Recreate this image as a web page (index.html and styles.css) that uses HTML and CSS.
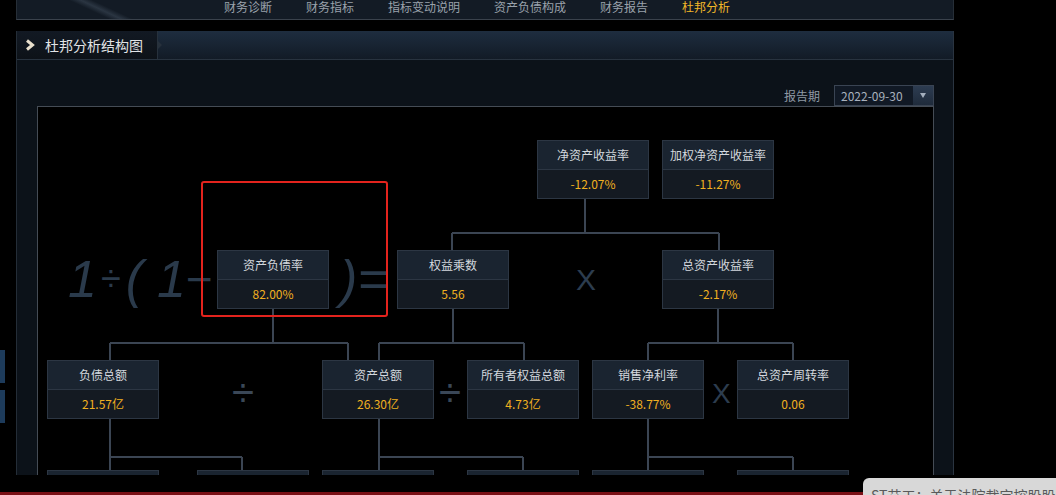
FILE: index.html
```html
<!DOCTYPE html>
<html lang="zh-CN">
<head>
<meta charset="utf-8">
<title>杜邦分析结构图</title>
<link rel="stylesheet" href="styles.css">
</head>
<body>
<div class="page">
  <nav class="topnav">
    <a class="nav-item">财务诊断</a>
    <a class="nav-item">财务指标</a>
    <a class="nav-item">指标变动说明</a>
    <a class="nav-item">资产负债构成</a>
    <a class="nav-item">财务报告</a>
    <a class="nav-item active">杜邦分析</a>
  </nav>

  <section class="panel">
    <header class="panel-head">
      <div class="tab">
        <svg class="chev" width="10" height="12" viewBox="0 0 10 12"><polyline points="2,1.5 7.5,6 2,10.5" fill="none" stroke="#e8dfcc" stroke-width="3"/></svg>
        <span class="tab-title">杜邦分析结构图</span>
      </div>
    </header>

    <div class="toolbar">
      <span class="label">报告期</span>
      <div class="select">
        <span class="select-text">2022-09-30</span>
        <span class="select-btn"><i class="tri"></i></span>
      </div>
    </div>

    <div class="chart">
      <svg class="links" width="895" height="368" viewBox="0 0 895 368">
        <g fill="none" stroke="#3b4553" stroke-width="2">
          <path d="M547 92V126M414 126H681M414 126V143M681 126V143"/>
          <path d="M235 202V236M72 236H310M72 236V253M310 236V253"/>
          <path d="M415 202V236M341 236H486M341 236V253M486 236V253"/>
          <path d="M680 202V236M610 236H755M610 236V253M755 236V253"/>
          <path d="M72 311V363M72 350H204M204 350V363"/>
          <path d="M341 311V363M341 350H485M485 350V363"/>
          <path d="M610 311V363M610 350H755M755 350V363"/>
        </g>
      </svg>

      <div class="formula formula-left">
        <span class="g g-one">1</span><span class="g g-div">÷</span><span class="g g-lp">(</span><span class="g g-one2">1</span><span class="g g-minus">−</span>
      </div>
      <div class="formula formula-right">
        <span class="g g-rp">)</span><span class="g g-eq">=</span>
      </div>
      <div class="op op-x op-x1">X</div>
      <div class="op op-x op-x2">X</div>
      <div class="op op-div op-div1">÷</div>
      <div class="op op-div op-div2">÷</div>

      <div class="node n-roe"><div class="n-title">净资产收益率</div><div class="n-value">-12.07%</div></div>
      <div class="node n-wroe"><div class="n-title">加权净资产收益率</div><div class="n-value">-11.27%</div></div>
      <div class="node n-debt-ratio"><div class="n-title">资产负债率</div><div class="n-value">82.00%</div></div>
      <div class="node n-multiplier"><div class="n-title">权益乘数</div><div class="n-value">5.56</div></div>
      <div class="node n-roa"><div class="n-title">总资产收益率</div><div class="n-value">-2.17%</div></div>
      <div class="node n-debt"><div class="n-title">负债总额</div><div class="n-value">21.57亿</div></div>
      <div class="node n-assets"><div class="n-title">资产总额</div><div class="n-value">26.30亿</div></div>
      <div class="node n-equity"><div class="n-title">所有者权益总额</div><div class="n-value">4.73亿</div></div>
      <div class="node n-margin"><div class="n-title">销售净利率</div><div class="n-value">-38.77%</div></div>
      <div class="node n-turnover"><div class="n-title">总资产周转率</div><div class="n-value">0.06</div></div>

      <div class="node b1"><div class="n-title"></div><div class="n-value"></div></div>
      <div class="node b2"><div class="n-title"></div><div class="n-value"></div></div>
      <div class="node b3"><div class="n-title"></div><div class="n-value"></div></div>
      <div class="node b4"><div class="n-title"></div><div class="n-value"></div></div>
      <div class="node b5"><div class="n-title"></div><div class="n-value"></div></div>
      <div class="node b6"><div class="n-title"></div><div class="n-value"></div></div>

      <div class="highlight"></div>
    </div>
  </section>

  <div class="footer-line"></div>

  <div class="side-tab side-tab-1"></div>
  <div class="side-tab side-tab-2"></div>

  <div class="toast">ST艾工：关于法院裁定控股股东所持部分股份</div>
</div>
</body>
</html>
```

FILE: styles.css
```css
html, body {
  margin: 0;
  padding: 0;
  background: #000;
}

body {
  font-family: "Noto Sans CJK SC", "Noto Sans", sans-serif;
}

.page {
  position: relative;
  width: 1056px;
  height: 495px;
  overflow: hidden;
  background: #000;
}

/* ---------- top navigation ---------- */
.topnav {
  margin-left: 16px;
  width: 938px;
  height: 20px;
  box-sizing: border-box;
  border-left: 1px solid #262e37;
  border-right: 1px solid #262e37;
  border-bottom: 1px solid #3a424c;
  background:
    linear-gradient(25deg, rgba(0,0,0,0) 39px, rgba(110,128,148,0.26) 44px, rgba(0,0,0,0) 49px),
    #131b25;
  display: flex;
  gap: 34px;
  padding-left: 207px;
  font-size: 12px;
  line-height: 14px;
}

.nav-item {
  color: #9aa2ab;
  white-space: nowrap;
}

.nav-item.active {
  color: #f2b728;
}

/* ---------- panel ---------- */
.panel {
  margin-top: 11px;
  margin-left: 16px;
  width: 938px;
  height: 444px;
  box-sizing: border-box;
  border-left: 1px solid #242d37;
  border-right: 1px solid #2a3440;
  background: #0c1219;
  overflow: hidden;
}

.panel-head {
  height: 29px;
  box-sizing: border-box;
  border-bottom: 1px solid #28333f;
  background: linear-gradient(#1e2d3f, #121b26);
  display: flex;
}

.tab {
  position: relative;
  width: 141px;
  box-sizing: border-box;
  border-right: 1px solid #27313c;
  background: linear-gradient(#121923, #0d1218);
  display: flex;
  align-items: center;
  padding-left: 8px;
  gap: 10px;
}

.tab::after {
  content: "";
  position: absolute;
  right: -5px;
  top: 10px;
  border-left: 4px solid #27313c;
  border-top: 4px solid transparent;
  border-bottom: 4px solid transparent;
}

.chev {
  display: block;
}

.tab-title {
  font-size: 14px;
  color: #e2e4e6;
  white-space: nowrap;
}

.toolbar {
  height: 46px;
  box-sizing: border-box;
  padding-top: 25px;
  padding-right: 19px;
  display: flex;
  justify-content: flex-end;
  align-items: flex-start;
  gap: 14px;
}

.label {
  font-size: 12px;
  line-height: 21px;
  color: #8f99a4;
}

.select {
  width: 100px;
  height: 21px;
  box-sizing: border-box;
  border: 1px solid #3a4453;
  background: #111925;
  display: flex;
}

.select-text {
  flex: 1;
  padding-left: 6px;
  font-size: 12px;
  line-height: 19px;
  color: #a9b1bd;
}

.select-btn {
  width: 20px;
  background: linear-gradient(#2d3c51, #1f2b3b);
  display: flex;
  align-items: center;
  justify-content: center;
}

.tri {
  display: block;
  width: 0;
  height: 0;
  border-top: 5px solid #a4afbd;
  border-left: 3px solid transparent;
  border-right: 3px solid transparent;
}

/* ---------- chart ---------- */
.chart {
  position: relative;
  margin-left: 20px;
  width: 897px;
  height: 369px;
  box-sizing: border-box;
  border: 1px solid #454c55;
  border-bottom: none;
  background: #000;
}

.links {
  position: absolute;
  left: 0;
  top: 0;
}

.formula {
  position: absolute;
  top: 146px;
  height: 52px;
  display: flex;
  align-items: center;
  font-family: "Liberation Sans", Arial, sans-serif;
  font-style: italic;
  color: #2a3a4b;
  white-space: nowrap;
}

.g {
  font-size: 52px;
  line-height: 52px;
}

.formula-left  { left: 30px; }
.formula-right { left: 302px; }

.g-div {
  font-size: 36px;
  line-height: 36px;
  font-style: normal;
  margin-left: 4px;
}

.g-lp    { margin-left: 5px; }
.g-one2  { margin-left: 14px; }
.g-minus {
  font-size: 46px;
  line-height: 46px;
  font-style: normal;
}
.g-eq    { margin-left: 1px; font-style: normal; }

.op {
  position: absolute;
  font-family: "Liberation Sans", Arial, sans-serif;
  white-space: nowrap;
}

.op-x {
  font-size: 30px;
  line-height: 30px;
  color: #2c3c4e;
}

.op-x1 { left: 538px; top: 158px; }
.op-x2 { left: 674px; top: 272px; font-size: 28px; }

.op-div {
  font-size: 40px;
  line-height: 40px;
  color: #3a4757;
}

.op-div1 { left: 194px; top: 265px; }
.op-div2 { left: 401px; top: 265px; }

.node {
  position: absolute;
  width: 112px;
  box-sizing: border-box;
  border: 1px solid #2c3643;
  background: #141a22;
  font-size: 12px;
  text-align: center;
  white-space: nowrap;
}

.n-title {
  height: 28px;
  line-height: 28px;
  background: #1a2430;
  color: #d3d8de;
  border-bottom: 1px solid #2c3643;
}

.n-value {
  height: 28px;
  line-height: 28px;
  color: #f0b020;
}

.n-roe        { left: 499px; top: 33px; }
.n-wroe       { left: 624px; top: 33px; }
.n-debt-ratio { left: 179px; top: 143px; }
.n-multiplier { left: 359px; top: 143px; }
.n-roa        { left: 624px; top: 143px; }
.n-debt       { left: 9px;   top: 253px; }
.n-assets     { left: 284px; top: 253px; }
.n-equity     { left: 429px; top: 253px; }
.n-margin     { left: 554px; top: 253px; }
.n-turnover   { left: 699px; top: 253px; }

.b1 { left: 9px;   top: 363px; }
.b2 { left: 159px; top: 363px; }
.b3 { left: 284px; top: 363px; }
.b4 { left: 429px; top: 363px; }
.b5 { left: 554px; top: 363px; }
.b6 { left: 699px; top: 363px; }

.highlight {
  position: absolute;
  left: 163px;
  top: 74px;
  width: 187px;
  height: 136px;
  box-sizing: border-box;
  border: 2px solid #e3231d;
  border-radius: 3px;
}

/* ---------- bottom ---------- */
.footer-line {
  margin-top: 17px;
  height: 3px;
  background: #7a1016;
}

.side-tab {
  position: absolute;
  left: 0;
  width: 5px;
  height: 33px;
  background: #1d3b5b;
}

.side-tab-1 { top: 350px; }
.side-tab-2 { top: 390px; }

.toast {
  position: absolute;
  left: 863px;
  top: 478px;
  width: 210px;
  height: 30px;
  box-sizing: border-box;
  padding: 7px 0 0 8px;
  background: #d8d8d8;
  border-radius: 6px 0 0 0;
  font-size: 14px;
  line-height: 20px;
  color: #5a5a5a;
  white-space: nowrap;
  overflow: hidden;
}
```
